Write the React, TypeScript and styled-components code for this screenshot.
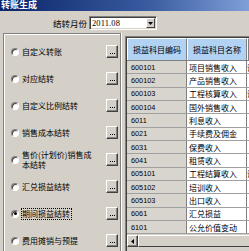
import React from "react";
import styled, { createGlobalStyle, css } from "styled-components";

const Global = createGlobalStyle`
  html, body { margin: 0; padding: 0; background: #d4d0c8; }
  body {
    width: 249px; height: 251px; overflow: hidden;
    font-family: "Noto Sans CJK SC", "Noto Sans CJK TC", sans-serif;
    color: #000;
  }
`;

const Window = styled.div`
  width: 249px;
  height: 251px;
  display: flex;
  flex-direction: column;
  background: #d4d0c8;
  overflow: hidden;
`;

const TitleBar = styled.div`
  height: 11px;
  flex: none;
  box-sizing: border-box;
  background: linear-gradient(to right, #0a246a 0%, #3a5ca0 60%, #7f9fd8 100%);
  color: #fff;
  font-weight: bold;
  font-size: 9px;
  line-height: 10px;
  padding-left: 1px;
  overflow: hidden;
  white-space: nowrap;
`;

const TopBar = styled.div`
  height: 22px;
  flex: none;
  display: flex;
  align-items: center;
  padding-left: 53px;
  gap: 2px;
  padding-top: 2px;
  box-sizing: border-box;
`;

const Label = styled.span`
  font-size: 8.5px;
  line-height: 10px;
  white-space: nowrap;
`;

const Combo = styled.div`
  width: 68px;
  height: 14px;
  box-sizing: border-box;
  background: #fff;
  border-top: 1px solid #808080;
  border-left: 1px solid #808080;
  border-right: 1px solid #fff;
  border-bottom: 1px solid #fff;
  box-shadow: inset 1px 1px 0 #404040, inset -1px -1px 0 #d4d0c8;
  display: flex;
  align-items: center;
  padding: 0 1px 0 2px;
`;

const ComboText = styled.span`
  flex: 1;
  font-family: "Liberation Serif", serif;
  font-size: 8.5px;
  line-height: 10px;
  letter-spacing: 0.1px;
`;

const ComboButton = styled.div`
  width: 9px;
  height: 10px;
  box-sizing: border-box;
  background: #d4d0c8;
  border-top: 1px solid #fff;
  border-left: 1px solid #fff;
  border-right: 1px solid #404040;
  border-bottom: 1px solid #404040;
  display: flex;
  align-items: center;
  justify-content: center;
`;

const Main = styled.div`
  flex: 1;
  min-height: 0;
  display: flex;
  align-items: stretch;
`;

const LeftPanel = styled.div`
  width: 118px;
  margin-left: 3px;
  flex: none;
  box-sizing: border-box;
  border-top: 1px solid #808080;
  border-left: 1px solid #808080;
  border-right: 1px solid #808080;
  box-shadow: inset 1px 1px 0 #fff, 1px 0 0 #fff;
  padding: 4px 2px 0 7px;
  display: flex;
  flex-direction: column;
`;

const OptionRow = styled.div`
  height: 27px;
  flex: none;
  display: flex;
  align-items: center;
  gap: 3px;
`;

const Radio = styled.span<{ $checked?: boolean }>`
  width: 8px;
  height: 8px;
  flex: none;
  box-sizing: border-box;
  border-radius: 50%;
  background: #fff;
  border: 1px solid;
  border-color: #808080 #fff #fff #808080;
  box-shadow: inset 1px 1px 0 #404040;
  display: flex;
  align-items: center;
  justify-content: center;
  ${(p) =>
    p.$checked &&
    css`
      &::after {
        content: "";
        width: 3px;
        height: 3px;
        border-radius: 50%;
        background: #000;
      }
    `}
`;

const OptionText = styled.span<{ $focus?: boolean }>`
  flex: 1;
  font-size: 8px;
  line-height: 10px;
  white-space: nowrap;
  ${(p) =>
    p.$focus &&
    css`
      flex: none;
      margin-right: auto;
      outline: 1px dotted #000;
      outline-offset: 0px;
      padding: 0 1px 0 0;
    `}
`;

const DotButton = styled.div`
  width: 12px;
  height: 13px;
  flex: none;
  box-sizing: border-box;
  background: #d4d0c8;
  border-top: 1px solid #fff;
  border-left: 1px solid #fff;
  border-right: 1px solid #404040;
  border-bottom: 1px solid #404040;
  box-shadow: inset -1px -1px 0 #808080;
  display: flex;
  align-items: flex-end;
  justify-content: center;
  padding-bottom: 3px;
`;

const Dot = styled.span`
  width: 1px;
  height: 1px;
  background: #000;
  margin: 0 0.5px;
`;

const GridFrame = styled.div`
  margin-left: 4px;
  margin-top: 3px;
  flex: 1;
  min-width: 0;
  box-sizing: border-box;
  border-top: 1px solid #808080;
  border-left: 1px solid #808080;
  box-shadow: inset 1px 1px 0 #404040;
  padding: 1px 0 0 1px;
  display: flex;
  flex-direction: column;
  overflow: hidden;
`;

const HeaderRow = styled.div`
  height: 23px;
  flex: none;
  display: flex;
  border-bottom: 1px solid #808080;
  box-sizing: border-box;
`;

const HeaderCell = styled.div<{ $w?: number }>`
  width: ${(p) => (p.$w ? `${p.$w}px` : "auto")};
  flex: ${(p) => (p.$w ? "none" : "1")};
  box-sizing: border-box;
  background: #b2d2f4;
  border-top: 1px solid #fff;
  border-left: 1px solid #fff;
  border-right: 1px solid #808080;
  font-size: 8px;
  line-height: 10px;
  display: flex;
  align-items: center;
  justify-content: center;
  white-space: nowrap;
  overflow: hidden;
`;

const Body = styled.div`
  flex: none;
  display: flex;
  flex-direction: column;
`;

const Row = styled.div`
  height: 13.34px;
  flex: none;
  display: flex;
  box-sizing: border-box;
  border-bottom: 1px solid #a0a0a0;
`;

const CodeCell = styled.div`
  width: 60px;
  flex: none;
  box-sizing: border-box;
  background: #d8d5ce;
  border-right: 1px solid #808080;
  font-family: "Liberation Sans", sans-serif;
  font-size: 7.3px;
  padding-left: 4px;
  display: flex;
  align-items: center;
`;

const NameCell = styled.div`
  width: 60px;
  flex: none;
  box-sizing: border-box;
  background: #fff;
  border-right: 1px solid #808080;
  font-size: 8px;
  padding-left: 2px;
  display: flex;
  align-items: center;
  white-space: nowrap;
  overflow: hidden;
`;

const ExtraCell = styled.div`
  flex: 1;
  background: #fff;
  font-size: 8px;
  padding-left: 0;
  display: flex;
  align-items: center;
  white-space: nowrap;
  overflow: hidden;
`;

const ScrollBar = styled.div`
  height: 12px;
  flex: none;
  display: flex;
  background: #e4e2dc;
  margin-top: 1px;
`;

const ScrollArrow = styled.div`
  width: 11px;
  height: 12px;
  flex: none;
  box-sizing: border-box;
  background: #d4d0c8;
  border-top: 1px solid #fff;
  border-left: 1px solid #fff;
  border-right: 1px solid #404040;
  border-bottom: 1px solid #404040;
  box-shadow: inset -1px -1px 0 #808080;
  display: flex;
  align-items: center;
  justify-content: center;
`;

const ScrollThumb = styled.div`
  flex: 1;
  height: 12px;
  box-sizing: border-box;
  background: #d4d0c8;
  border-top: 1px solid #fff;
  border-left: 1px solid #fff;
  border-bottom: 1px solid #404040;
`;

const options: { label: React.ReactNode; checked?: boolean }[] = [
  { label: "自定义转账" },
  { label: "对应结转" },
  { label: "自定义比例结转" },
  { label: "销售成本结转" },
  {
    label: (
      <>
        售价(计划价)销售成
        <br />
        本结转
      </>
    ),
  },
  { label: "汇兑损益结转" },
  { label: "期间损益结转", checked: true },
  { label: "费用摊销与预提" },
];

const rows: [string, string, string?][] = [
  ["600101", "项目销售收入", "请"],
  ["600102", "产品销售收入"],
  ["600103", "工程核算收入", "请"],
  ["600104", "国外销售收入"],
  ["6011", "利息收入"],
  ["6021", "手续费及佣金"],
  ["6031", "保费收入"],
  ["6041", "租赁收入"],
  ["605101", "工程结算收入", "请"],
  ["605102", "培训收入"],
  ["605103", "出口收入"],
  ["6061", "汇兑损益"],
  ["6101", "公允价值变动"],
];

export default function App() {
  return (
    <>
      <Global />
      <Window>
        <TitleBar>转账生成</TitleBar>
        <TopBar>
          <Label>结转月份</Label>
          <Combo>
            <ComboText>2011.08</ComboText>
            <ComboButton>
              <svg width="5" height="3" viewBox="0 0 5 3">
                <path d="M0 0H5L2.5 3Z" fill="#000" />
              </svg>
            </ComboButton>
          </Combo>
        </TopBar>
        <Main>
          <LeftPanel>
            {options.map((o, i) => (
              <OptionRow key={i}>
                <Radio $checked={o.checked} />
                <OptionText $focus={o.checked}>{o.label}</OptionText>
                <DotButton>
                  <Dot />
                  <Dot />
                  <Dot />
                </DotButton>
              </OptionRow>
            ))}
          </LeftPanel>
          <GridFrame>
            <HeaderRow>
              <HeaderCell $w={60}>损益科目编码</HeaderCell>
              <HeaderCell $w={60}>损益科目名称</HeaderCell>
              <HeaderCell />
            </HeaderRow>
            <Body>
              {rows.map(([code, name, extra]) => (
                <Row key={code}>
                  <CodeCell>{code}</CodeCell>
                  <NameCell>{name}</NameCell>
                  <ExtraCell>{extra ?? ""}</ExtraCell>
                </Row>
              ))}
            </Body>
            <ScrollBar>
              <ScrollArrow>
                <svg width="3" height="5" viewBox="0 0 3 5">
                  <path d="M3 0V5L0 2.5Z" fill="#000" />
                </svg>
              </ScrollArrow>
              <ScrollThumb />
            </ScrollBar>
          </GridFrame>
        </Main>
      </Window>
    </>
  );
}
